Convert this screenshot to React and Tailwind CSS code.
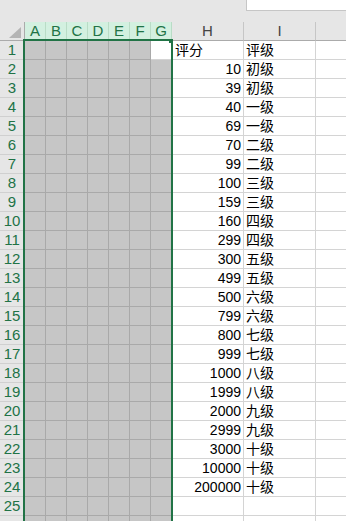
import React from "react";

const data = [
  ["评分", "评级", true],
  ["10", "初级"],
  ["39", "初级"],
  ["40", "一级"],
  ["69", "一级"],
  ["70", "二级"],
  ["99", "二级"],
  ["100", "三级"],
  ["159", "三级"],
  ["160", "四级"],
  ["299", "四级"],
  ["300", "五级"],
  ["499", "五级"],
  ["500", "六级"],
  ["799", "六级"],
  ["800", "七级"],
  ["999", "七级"],
  ["1000", "八级"],
  ["1999", "八级"],
  ["2000", "九级"],
  ["2999", "九级"],
  ["3000", "十级"],
  ["10000", "十级"],
  ["200000", "十级"],
  ["", ""],
  ["", ""],
];

const letters = ["A", "B", "C", "D", "E", "F", "G"];
const font = { fontFamily: '"Liberation Sans", "Noto Sans CJK SC", sans-serif' };

export default function App() {
  return (
    <div className="relative w-[346px] h-[521px] overflow-hidden bg-white" style={font}>
      <div className="h-[22px] bg-[#e6e6e6] flex justify-end">
        <div className="w-[100px] h-[11px] bg-white border-l border-b border-[#c6c6c6]" />
      </div>
      <div className="flex h-[19px] bg-[#e6e6e6]">
        <div className="relative w-[25px] shrink-0 border-r border-b border-[#ababab]">
          <svg className="absolute left-[9px] top-[5px]" width="12" height="11" viewBox="0 0 12 11">
            <polygon points="12,0 12,11 0,11" fill="#b4b4b4" />
          </svg>
        </div>
        {letters.map((l) => (
          <div
            key={l}
            className="w-[21px] shrink-0 bg-[#d3f0e0] border-r border-r-[#b9dcc6] border-b border-b-[#ababab] text-[15px] leading-[18px] text-[#217346] text-center"
          >
            {l}
          </div>
        ))}
        <div className="w-[72px] shrink-0 border-r border-r-[#c6c6c6] border-b border-b-[#ababab] text-[15px] leading-[18px] text-[#444] text-center">
          H
        </div>
        <div className="w-[72px] shrink-0 border-r border-r-[#c6c6c6] border-b border-b-[#ababab] text-[15px] leading-[18px] text-[#444] text-center">
          I
        </div>
        <div className="flex-1 border-b border-[#ababab]" />
      </div>
      {data.map(([h, i, isText], idx) => (
        <div key={idx} className="flex h-[19px]">
          <div className="w-[25px] shrink-0 bg-[#e6e6e6] border-r border-b border-[#d0d0d0] text-[15px] leading-[18px] text-[#217346] text-center">
            {idx < 25 ? idx + 1 : ""}
          </div>
          {letters.map((l, k) => (
            <div
              key={l}
              className={
                idx === 0 && k === 6
                  ? "w-[21px] shrink-0 bg-white border-r border-b border-[#d4d4d4]"
                  : "w-[21px] shrink-0 bg-[#c6c6c6] border-r border-b border-[#a9a9a9]"
              }
            />
          ))}
          <div
            className={
              "w-[72px] shrink-0 border-r border-b border-[#d4d4d4] text-[14px] leading-[19px] text-black whitespace-nowrap " +
              (isText ? "text-left pl-[3px]" : "text-right pr-[2px]")
            }
          >
            {h}
          </div>
          <div className="w-[72px] shrink-0 border-r border-b border-[#d4d4d4] text-[14px] leading-[19px] text-black pl-[2px] whitespace-nowrap">
            {i}
          </div>
          <div className="flex-1 border-b border-[#d4d4d4]" />
        </div>
      ))}
      <div className="absolute left-[23px] top-[39px] w-[150px] h-[520px] border-2 border-[#217346]" />
      <div className="absolute left-[169px] top-[39px] w-[4px] h-[4px] bg-[#217346]" />
    </div>
  );
}
